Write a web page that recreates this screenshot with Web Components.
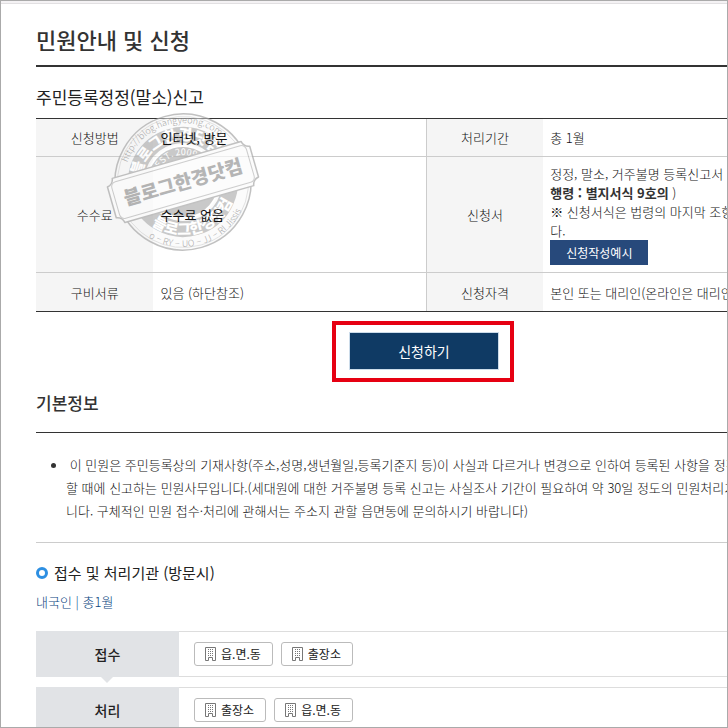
<!DOCTYPE html>
<html lang="ko">
<head>
<meta charset="utf-8">
<title>민원안내 및 신청</title>
<style>
html, body { margin: 0; height: 100%; }
body { font: 300 13px/19px "Noto Sans CJK KR", sans-serif; color: #111; background: #fff; overflow: hidden; }
</style>
</head>
<body>
<page-frame>
  <page-title>민원안내 및 신청</page-title>
  <section-title>주민등록정정(말소)신고</section-title>
  <info-table></info-table>
  <apply-bar>신청하기</apply-bar>
  <section-title class="lined">기본정보</section-title>
  <info-note>&nbsp;이 민원은 주민등록상의 기재사항(주소,성명,생년월일,등록기준지 등)이 사실과 다르거나 변경으로 인하여 등록된 사항을 정정<br>할 때에 신고하는 민원사무입니다.(세대원에 대한 거주불명 등록 신고는 사실조사 기간이 필요하여 약 30일 정도의 민원처리기<br>니다. 구체적인 민원 접수·처리에 관해서는 주소지 관할 읍면동에 문의하시기 바랍니다)</info-note>
  <ring-title>접수 및 처리기관 (방문시)<span slot="sub">내국인 | 총1월</span></ring-title>
  <step-row label="접수" arrow><office-chip>읍.면.동</office-chip><office-chip>출장소</office-chip></step-row>
  <step-row label="처리"><office-chip>출장소</office-chip><office-chip>읍.면.동</office-chip></step-row>
</page-frame>
<script>
const define = (name, html, setup) => customElements.define(name, class extends HTMLElement {
  constructor() {
    super();
    this.attachShadow({ mode: "open" }).innerHTML = html;
  }
  connectedCallback() { if (setup) setup(this, this.shadowRoot); }
});

define("page-frame", `<style>
:host { display: block; box-sizing: border-box; height: 100vh; border: 1px solid #aaa; padding-left: 35px; overflow: hidden; box-shadow: inset 0 2px #f4f2f4, inset 0 3px #e2e0e2; }
</style><slot></slot>`);

define("page-title", `<style>
:host { display: block; border-bottom: 2px solid #333; }
h1 { margin: 0; padding: 22px 0 10px; color: #333; font-size: 22px; line-height: 32px; font-weight: 500; }
</style><h1><slot></slot></h1>`);

define("section-title", `<style>
:host { display: block; padding: 18px 0 9px; }
:host(.lined) { padding: 9px 0 17px; border-bottom: 1px solid #333; }
h2 { margin: 0; color: #222; font-size: 17px; line-height: 24px; font-weight: 400; }
:host(.lined) h2 { color: #333; font-weight: 500; }
</style><h2><slot></slot></h2>`);

define("blog-stamp", `<style>
:host { display: block; width: 156px; height: 142px; pointer-events: none; }
svg { display: block; }
text { font-family: "Noto Sans CJK KR", sans-serif; }
</style>
<svg width="156" height="142" viewBox="-78 -71 156 142" aria-hidden="true">
  <defs>
    <path id="web" d="M-59 0A59 59 0 0 1 59 0"/>
    <path id="top" d="M-42 0A42 42 0 0 1 42 0"/>
    <path id="low" d="M-53 0A53 53 0 0 0 53 0"/>
    <path id="rim" d="M-65 0A65 65 0 0 0 65 0"/>
    <path id="est" d="M-27 0A27 27 0 0 1 27 0"/>
  </defs>
  <g opacity=".72" transform="rotate(-16)">
    <circle r="68" fill="#f6f6f6" fill-opacity=".6" stroke="#aaa" stroke-width="1.5"/>
    <circle r="65.500" fill="none" stroke="#ccc" stroke-width=".7"/>
    <circle r="47" fill="none" stroke="#b5b5b5" stroke-width="16"/>
    <circle r="37" fill="#fff"/>
    <circle r="35" fill="#b5b5b5"/>
    <g fill="#888" font-size="9" text-anchor="middle">
      <text><textPath href="#web" startOffset="50%">http://blog.hangyeong.com</textPath></text>
      <text><textPath href="#rim" startOffset="50%">o – RY – UO – JJ – RI  Jissis</textPath></text>
    </g>
    <g fill="#fff" font-weight="900" font-size="15" text-anchor="middle">
      <text><textPath href="#top" startOffset="50%">블로그한경닷컴</textPath></text>
      <text><textPath href="#low" startOffset="50%">블로그한경닷컴</textPath></text>
      <text font-size="9" font-weight="400"><textPath href="#est" startOffset="50%">EST. 2009</textPath></text>
    </g>
    <path d="M-67 -23H67Q68 -17 74 -16V16Q68 17 67 23H-67Q-68 17 -74 16V-16Q-68 -17 -67 -23Z" fill="#fbfbfb" stroke="#aaa" stroke-width="1.5" stroke-linejoin="round"/>
    <rect x="-70" y="-19" width="140" height="38" rx="5" fill="none" stroke="#bbb"/>
    <text y="7" text-anchor="middle" font-size="19" font-weight="900" fill="#999">블로그한경닷컴</text>
  </g>
</svg>`);

define("info-table", `<style>
:host { display: block; position: relative; }
table { width: 100%; table-layout: fixed; border-collapse: separate; border-spacing: 0; border: solid #333; border-width: 1px 0; white-space: nowrap; line-height: 19px; }
.label { width: 17%; } .value { width: 39.4%; }
th, td { box-sizing: border-box; height: 38px; padding: 0 0 0 7px; overflow: hidden; border-bottom: 1px solid #ccc; text-align: left; font-weight: 300; }
tr:last-child > * { border-bottom: 0; }
th { padding: 0; background: #f5f5f5; text-align: center; }
td + th { border-left: 1px solid #ccc; }
td.form { padding: 7px 0 7px 7px; }
b { color: #333; font-weight: 700; }
td button { display: block; height: 25px; padding: 0 16px; border: 0; background: #27497b; color: #fff; font: 400 12px/25px "Noto Sans CJK KR", sans-serif; }
blog-stamp { position: absolute; left: 69px; top: -7px; }
.over { position: relative; z-index: 1; color: #111; font-weight: 400; }
</style>
<table>
  <colgroup><col class="label"><col class="value"><col class="label"><col></colgroup>
  <tr><th scope="row">신청방법</th><td><span class="over">인터넷, 방문</span></td><th scope="row">처리기간</th><td>총 1월</td></tr>
  <tr><th scope="row">수수료</th><td><span class="over">수수료 없음</span></td><th scope="row">신청서</th>
    <td class="form">정정, 말소, 거주불명 등록신고서 (<br><b>행령 : 별지서식 9호의</b> )<br>※ 신청서식은 법령의 마지막 조항<br>다.<button type="button">신청작성예시</button></td></tr>
  <tr><th scope="row">구비서류</th><td>있음 (하단참조)</td><th scope="row">신청자격</th><td>본인 또는 대리인(온라인은 대리인</td></tr>
</table>
<blog-stamp></blog-stamp>`);

define("apply-bar", `<style>
:host { display: flex; justify-content: center; padding: 9px 0 0 83px; }
div { border: 4px solid #e60012; padding: 7px 11px 8px 13px; }
button { display: block; width: 150px; height: 38px; border: 1px solid #ccdcea; background: #0f3a64; color: #fff; font: 400 14px/20px "Noto Sans CJK KR", sans-serif; }
</style><div><button type="button"><slot></slot></button></div>`);

define("info-note", `<style>
:host { display: block; border-bottom: 1px solid #ccc; }
ul { margin: 0; padding: 20px 0 20px 30px; list-style: none; white-space: nowrap; line-height: 23px; }
li { display: flex; margin-left: -15px; gap: 10px; }
li::before { content: ""; flex: none; width: 5px; height: 5px; margin-top: 10px; border-radius: 50%; background: #333; }
</style><ul><li><div><slot></slot></div></li></ul>`);

define("ring-title", `<style>
:host { display: block; padding: 19px 0 20px; }
h3 { display: flex; align-items: center; gap: 6px; margin: 0; color: #222; font-size: 15px; line-height: 22px; font-weight: 400; }
h3::before { content: ""; box-sizing: border-box; width: 12px; height: 12px; border: 3px solid #2d8fe2; border-radius: 50%; }
p { margin: 8px 0 0; color: #0a4580; }
</style><h3><slot></slot></h3><p><slot name="sub"></slot></p>`);

define("step-row", `<style>
:host { display: flex; position: relative; box-sizing: border-box; height: 46px; margin-bottom: 10px; border: solid #ddd; border-width: 1px 0; }
h4 { width: 143px; margin: -1px 15px -1px 0; background: #e1e3e6; color: #222; text-align: center; font-size: 14px; line-height: 46px; font-weight: 500; }
div { display: flex; align-items: center; gap: 8px; }
:host([arrow])::after { content: ""; position: absolute; left: 65px; top: 45px; border: solid transparent; border-width: 6px 6px 0; border-top-color: #e1e3e6; }
</style><h4></h4><div><slot></slot></div>`, (el, root) => { root.querySelector("h4").textContent = el.getAttribute("label"); });

define("office-chip", `<style>
:host { display: block; }
button { display: flex; align-items: center; gap: 5px; height: 24px; padding: 0 11px 0 10px; border: 1px solid #bbb; border-radius: 3px; background: #fff; color: #222; font: 400 12px/18px "Noto Sans CJK KR", sans-serif; }
</style><button type="button"><svg width="11" height="14" viewBox="0 0 11 14" fill="none" stroke="#777"><path d="M.5 13.500V.5H10.500V13.500H7.500V10.500H3.500V13.500Z"/><path d="M3 2.500H8M3 4.500H8M3 6.500H8M3 8.500H8" stroke-dasharray="1 1"/></svg><slot></slot></button>`);
</script>
</body>
</html>
